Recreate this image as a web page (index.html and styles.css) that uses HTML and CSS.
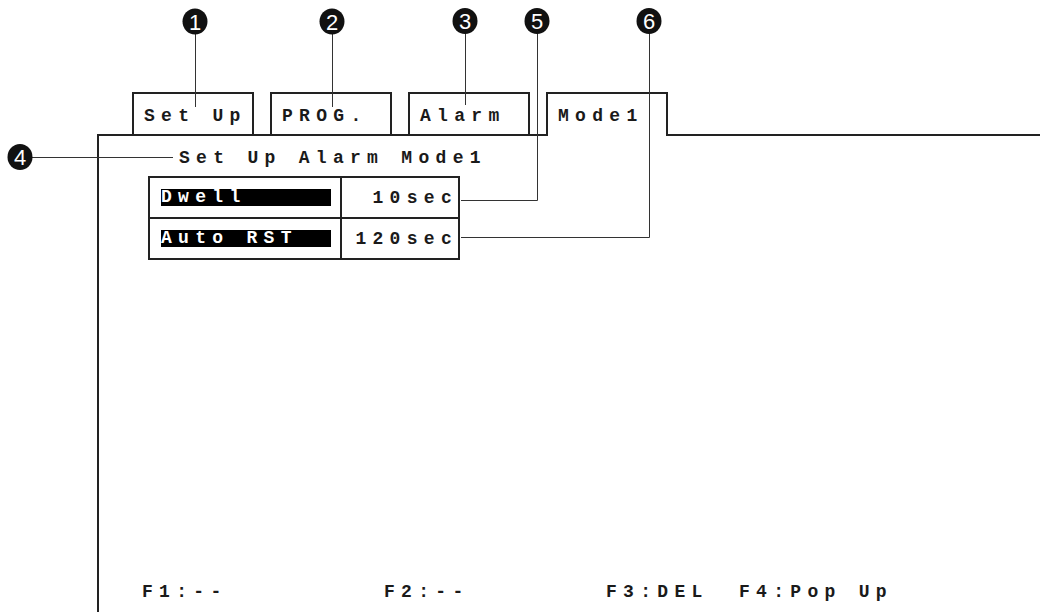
FILE: index.html
```html
<!DOCTYPE HTML>
<html>
<head>
<meta charset="utf-8">
<title>Set Up Alarm Mode1</title>
<link rel="stylesheet" href="styles.css">
</head>
<body>
	<div id="page">
		<div class="tabs">
			<div class="tab">Set Up</div>
			<div class="tab">PROG.</div>
			<div class="tab">Alarm</div>
			<div class="tab active">Mode1</div>
		</div>
		<div class="panel">
			<div class="title">Set Up Alarm Mode1</div>
			<div class="grid">
				<div class="name"><span>Dwell</span></div>
				<div class="value">10sec</div>
				<div class="name row2"><span>Auto RST</span></div>
				<div class="value row2">120sec</div>
			</div>
			<div class="keys">
				<span class="k1">F1:--</span>
				<span class="k2">F2:--</span>
				<span class="k3">F3:DEL</span>
				<span>F4:Pop Up</span>
			</div>
		</div>
		<!-- callout numbers drawn over the screen -->
		<svg class="callouts" width="1040" height="612" viewBox="0 0 1040 612">
			<g class="lines">
				<line x1="195.5" y1="34" x2="195.5" y2="107"/>
				<line x1="332.5" y1="34" x2="332.5" y2="107"/>
				<line x1="465.5" y1="33" x2="465.5" y2="105"/>
				<polyline points="461,200.5 537.5,200.5 537.5,33"/>
				<polyline points="461,237.5 649.5,237.5 649.5,33"/>
				<line x1="31" y1="157.5" x2="173" y2="157.5"/>
			</g>
			<g class="dots">
				<ellipse cx="195" cy="21.5" rx="12.5" ry="13"/>
				<ellipse cx="332" cy="21.5" rx="12.5" ry="13"/>
				<ellipse cx="465" cy="21" rx="12.5" ry="13"/>
				<ellipse cx="537" cy="21" rx="12.5" ry="13"/>
				<ellipse cx="649" cy="21" rx="12.5" ry="13"/>
				<ellipse cx="20" cy="157" rx="12.5" ry="13"/>
			</g>
			<g class="nums">
				<text x="195" y="29.5">1</text>
				<text x="332" y="29.5">2</text>
				<text x="465" y="29">3</text>
				<text x="537" y="29">5</text>
				<text x="649" y="29">6</text>
				<text x="20" y="165">4</text>
			</g>
		</svg>
	</div>
</body>
</html>
```

FILE: styles.css
```css
*{
	margin: 0;
	padding: 0;
}

body{
	background: #fff;
	color: #1a1a1a;
	font-family: "Liberation Mono", "DejaVu Sans Mono", monospace;
	font-weight: bold;
	font-size: 18px;
	letter-spacing: 6.3px;
	line-height: 20px;
}

#page{
	position: relative;
	width: 1040px;
	height: 612px;
	overflow: hidden;
}

/* tab row */
.tabs{
	display: flex;
	align-items: flex-end;
	gap: 16px;
	padding: 92px 0 0 132px;
}
.tab{
	box-sizing: border-box;
	width: 122px;
	height: 42px;
	padding: 12px 0 0 10px;
	border: 2px solid #222;
	border-bottom: none;
	white-space: pre;
}
.tab.active{
	position: relative;
	z-index: 1;
	height: 44px;
	margin-bottom: -2px;
	background: #fff;
}

/* screen frame */
.panel{
	box-sizing: border-box;
	display: flex;
	flex-direction: column;
	height: 478px;
	margin-left: 97px;
	border-top: 2px solid #222;
	border-left: 2px solid #222;
}
.title{
	margin: 12px 0 0 80px;
	white-space: pre;
}

.grid{
	display: grid;
	grid-template-columns: 192px 116px;
	width: fit-content;
	margin: 8px 0 0 49px;
	border: 2px solid #222;
}
.name{
	height: 17px;
	padding: 11px 9px 11px 11px;
	border-right: 2px solid #222;
}
.name span{
	display: block;
	height: 17px;
	line-height: 17px;
	background: #000;
	color: #fff;
	white-space: pre;
}
.value{
	height: 37px;
	padding-top: 2px;
	line-height: 37px;
	text-align: right;
}
.row2{
	border-top: 2px solid #222;
}

.keys{
	display: flex;
	margin-top: auto;
	padding: 0 0 10px 43px;
	white-space: pre;
}
.k1{
	width: 242px;
}
.k2{
	width: 222px;
}
.k3{
	width: 133px;
}

.callouts{
	position: absolute;
	z-index: 2;
	left: 0;
	top: 0;
	pointer-events: none;
}
.callouts .lines line,
.callouts .lines polyline{
	fill: none;
	stroke: #333;
	stroke-width: 1;
}
.callouts .dots ellipse{
	fill: #111;
}
.callouts .nums text{
	fill: #fff;
	font-family: "Liberation Sans", Arial, sans-serif;
	font-weight: normal;
	font-size: 22px;
	letter-spacing: 0;
	text-anchor: middle;
}
```
